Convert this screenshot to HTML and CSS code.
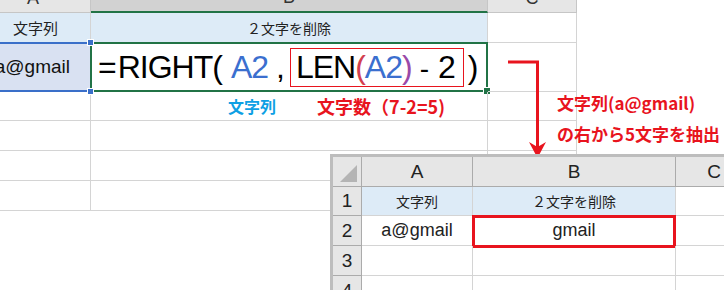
FILE: index.html
```html
<!DOCTYPE html>
<html>
	<head>
		<meta charset="UTF-8">
		<title>RIGHT関数</title>
		<link rel="stylesheet" href="styles.css">
	</head>
	<body>
		<div class="page">
			<!-- 上の大きい表 -->
			<div class="sheet">
				<div class="hd hd-a"><span>A</span></div>
				<div class="hd hd-sel"><span>B</span></div>
				<div class="hd"><span>C</span></div>

				<div class="cell fill a1">文字列</div>
				<div class="cell fill b1">２文字を削除</div>
				<div class="cell"></div>

				<div class="cell a2">a@gmail<i class="handle h-top"></i><i class="handle h-bot"></i></div>
				<div class="cell b2">
					<span class="f-eq">=</span><span class="f-fn">RIGHT(</span><span class="f-ref f-a2">A2</span><span class="f-comma">,</span><span class="f-box"><span>LEN</span><span class="f-p1">(</span><span class="f-ref">A2</span><span class="f-p2">)</span><span class="f-minus">-</span><span class="f-two">2</span></span><span class="f-close">)</span>
				</div>
				<div class="cell"></div>

				<div class="cell"></div>
				<div class="cell labels">
					<span class="lb-blue">文字列</span>
					<span class="lb-red">文字数（7-2=5)</span>
				</div>
				<div class="cell"></div>

				<div class="cell"></div>
				<div class="cell"></div>
				<div class="cell"></div>

				<div class="cell"></div>
				<div class="cell"></div>
				<div class="cell"></div>

				<div class="cell"></div>
				<div class="cell"></div>
				<div class="cell"></div>
			</div>

			<!-- 矢印 -->
			<svg class="arrow" width="724" height="290" viewBox="0 0 724 290">
				<polyline points="508,62 537.5,62 537.5,148" fill="none" stroke="#e8141e" stroke-width="3"/>
				<path d="M529,142 L537.5,158 L546,142 L537.5,147 Z" fill="#e8141e"/>
			</svg>

			<div class="note">
				<p>文字列(a@gmail)</p>
				<p>の右から5文字を抽出</p>
			</div>

			<!-- 結果の小さい表 -->
			<div class="mini">
				<div class="m-hd corner"></div>
				<div class="m-hd">A</div>
				<div class="m-hd">B</div>
				<div class="m-hd">C</div>

				<div class="m-row">1</div>
				<div class="m-cell fill">文字列</div>
				<div class="m-cell fill">２文字を削除</div>
				<div class="m-cell"></div>

				<div class="m-row">2</div>
				<div class="m-cell latin">a@gmail</div>
				<div class="m-cell latin result">gmail</div>
				<div class="m-cell"></div>

				<div class="m-row">3</div>
				<div class="m-cell"></div>
				<div class="m-cell"></div>
				<div class="m-cell"></div>

				<div class="m-row">4</div>
				<div class="m-cell"></div>
				<div class="m-cell"></div>
				<div class="m-cell"></div>
			</div>
		</div>
	</body>
</html>
```

FILE: styles.css
```css
* {
	box-sizing: border-box;
}

body {
	margin: 0;
	background: #fff;
	font-family: "Noto Sans CJK JP", "Liberation Sans", sans-serif;
	color: #000;
}

.page {
	width: 724px;
	height: 290px;
	position: relative;
	overflow: hidden;
}

.sheet {
	display: grid;
	grid-template-columns: 91px 397px 89px;
	grid-template-rows: 13px 30px 49px 29px 30px 30px 30px;
	width: 577px;
}

.hd {
	background: #e6e6e6;
	border-right: 1px solid #c6c6c6;
	border-bottom: 1px solid #c6c6c6;
	overflow: hidden;
	display: flex;
	justify-content: center;
	align-items: flex-end;
}

.hd span {
	font-family: "Liberation Sans", sans-serif;
	font-size: 18px;
	line-height: 18px;
	margin-bottom: 5px;
	color: #333;
}

.hd-a {
	padding-right: 24px;
}

.hd-sel {
	background: #d2d2d2;
	border-bottom: 2px solid #217346;
}

.cell {
	border-right: 1px solid #d4d4d4;
	border-bottom: 1px solid #d4d4d4;
	display: flex;
	align-items: center;
	justify-content: center;
	font-size: 14px;
	color: #222;
	position: relative;
}

.fill {
	background: #ddebf7;
}

.a1 {
	font-size: 15px;
	padding-right: 19px;
}

.b1 {
	font-size: 14px;
}

.a2 {
	background: #d9e1f2;
	justify-content: flex-end;
	padding-right: 20px;
	font-family: "Liberation Sans", sans-serif;
	font-size: 19px;
	color: #111;
}

.a2::before {
	content: "";
	position: absolute;
	left: 0;
	right: -1px;
	top: -1px;
	bottom: -1px;
	border-top: 2px solid #3a6fc9;
	border-bottom: 2px solid #3a6fc9;
}

.handle {
	position: absolute;
	right: -4px;
	width: 7px;
	height: 7px;
	background: #3a6fc9;
	border: 1px solid #fff;
	z-index: 2;
}

.h-top {
	top: -4px;
}

.h-bot {
	bottom: -4px;
}

.b2 {
	justify-content: flex-start;
	padding-left: 7px;
	font-family: "Liberation Sans", sans-serif;
	font-size: 32px;
	letter-spacing: -1px;
	line-height: 36px;
	color: #000;
	white-space: pre;
}

.b2::before {
	content: "";
	position: absolute;
	left: -1px;
	right: -1px;
	top: -1px;
	bottom: -1px;
	border: 2px solid #217346;
}

.b2::after {
	content: "";
	position: absolute;
	right: -4px;
	bottom: -4px;
	width: 6px;
	height: 6px;
	background: #217346;
	border: 1px solid #fff;
}

.f-eq {
	font-weight: normal;
}

.f-fn {
	margin-left: 2px;
}

.f-a2 {
	margin-left: 9px;
}

.f-comma {
	margin-left: 8px;
}

.f-ref {
	color: #3b6fcf;
}

.f-p1 {
	color: #d2404f;
}

.f-p2 {
	color: #9a4aa8;
}

.f-minus {
	margin-left: 8px;
	font-size: 28px;
}

.f-two {
	margin-left: 10px;
}

.f-box {
	display: inline-block;
	border: 1px solid #e8141e;
	height: 39px;
	line-height: 37px;
	padding: 0 8px 0 5px;
	margin-left: 6px;
}

.f-close {
	margin-left: 4px;
}

.labels {
	justify-content: flex-start;
	padding-left: 137px;
	font-weight: bold;
	gap: 41px;
}

.lb-blue {
	color: #0ea0e4;
	font-size: 16px;
}

.lb-red {
	color: #e8141e;
	font-size: 18px;
}

.arrow {
	position: absolute;
	left: 0;
	top: 0;
}

.note {
	position: absolute;
	left: 557px;
	top: 93px;
	color: #e8141e;
	font-weight: bold;
	font-size: 17px;
}

.note p {
	margin: 0 0 11px;
	line-height: 20px;
}

.mini {
	position: absolute;
	left: 330px;
	top: 154px;
	width: 420px;
	border-top: 3px solid #bdbdbd;
	border-left: 3px solid #bdbdbd;
	display: grid;
	grid-template-columns: 29px 111px 203px 77px;
	grid-template-rows: 30px 29px 30px 30px 30px;
	background: #fff;
}

.m-hd, .m-row {
	background: #e6e6e6;
	border-right: 1px solid #ababab;
	border-bottom: 1px solid #ababab;
	display: flex;
	align-items: center;
	justify-content: center;
	font-family: "Liberation Sans", sans-serif;
	font-size: 19px;
	color: #222;
}

.corner {
	position: relative;
}

.corner::after {
	content: "";
	position: absolute;
	right: 4px;
	bottom: 4px;
	width: 0;
	height: 0;
	border-left: 17px solid transparent;
	border-bottom: 17px solid #b4b4b4;
}

.m-cell {
	border-right: 1px solid #d4d4d4;
	border-bottom: 1px solid #d4d4d4;
	display: flex;
	align-items: center;
	justify-content: center;
	font-size: 14px;
	color: #222;
	position: relative;
}

.latin {
	font-family: "Liberation Sans", sans-serif;
	font-size: 18px;
}

.result::before {
	content: "";
	position: absolute;
	left: -1px;
	right: -1px;
	top: -1px;
	bottom: -3px;
	border: 3px solid #e8141e;
}
```
